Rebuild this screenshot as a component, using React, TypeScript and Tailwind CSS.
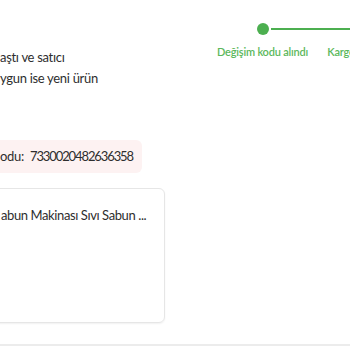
import React from 'react';

const steps = [
  { label: 'Değişim kodu alındı', done: true },
  { label: 'Kargoya teslim edildi', done: false },
];

function Stepper() {
  return (
    <div className="flex shrink-0">
      {steps.map((step, i) => (
        <div key={step.label} className="w-[113px] flex flex-col items-center">
          <div className="w-full h-[12px] flex items-center">
            <div className={`flex-1 h-[2px] mr-[2px] ${i === 0 ? '' : 'bg-[#4caf50]'}`} />
            <div
              className={`w-[12px] h-[12px] rounded-full ${step.done ? 'bg-[#4caf50]' : 'bg-[#d9d9d9]'}`}
            />
            <div className="flex-1 h-[2px] ml-[2px] bg-[#4caf50]" />
          </div>
          <div className="mt-[10px] text-[11px] leading-[14px] font-semibold tracking-[-0.2px] text-[#5cb85c] whitespace-nowrap">
            {step.label}
          </div>
        </div>
      ))}
    </div>
  );
}

export default function App() {
  return (
    <div
      className="w-[350px] h-[350px] bg-white overflow-hidden text-[#2e2e2e] flex flex-col"
      style={{ fontFamily: '"Source Sans Pro", Lato, "Noto Sans", sans-serif' }}
    >
      <div className="flex pt-[23px]">
        <div className="w-[206px] shrink-0 pt-[24px] text-[13px] leading-[21px] tracking-[-0.3px]">
          <p>aştı ve satıcı</p>
          <p>ygun ise yeni ürün</p>
        </div>
        <Stepper />
      </div>

      <div className="mt-[51px] self-start bg-[#fdf2f2] rounded-r-[6px] h-[33px] flex items-center pr-[9px] text-[13px] tracking-[-0.3px]">
        <span>odu:</span>
        <span className="ml-[6px] tracking-[-1.1px]">7330020482636358</span>
      </div>

      <div className="mt-[15px] -ml-[20px] w-[185px] h-[135px] rounded-[6px] border border-[#e6e6e6] shadow-[0_1px_2px_rgba(0,0,0,0.06)] pl-[20px] pt-[16px] text-[13px] leading-[20px] tracking-[-0.4px] whitespace-nowrap">
        abun Makinası Sıvı Sabun ...
      </div>

      <div className="mt-[21px] h-[2px] bg-[#ececec]" />
    </div>
  );
}
